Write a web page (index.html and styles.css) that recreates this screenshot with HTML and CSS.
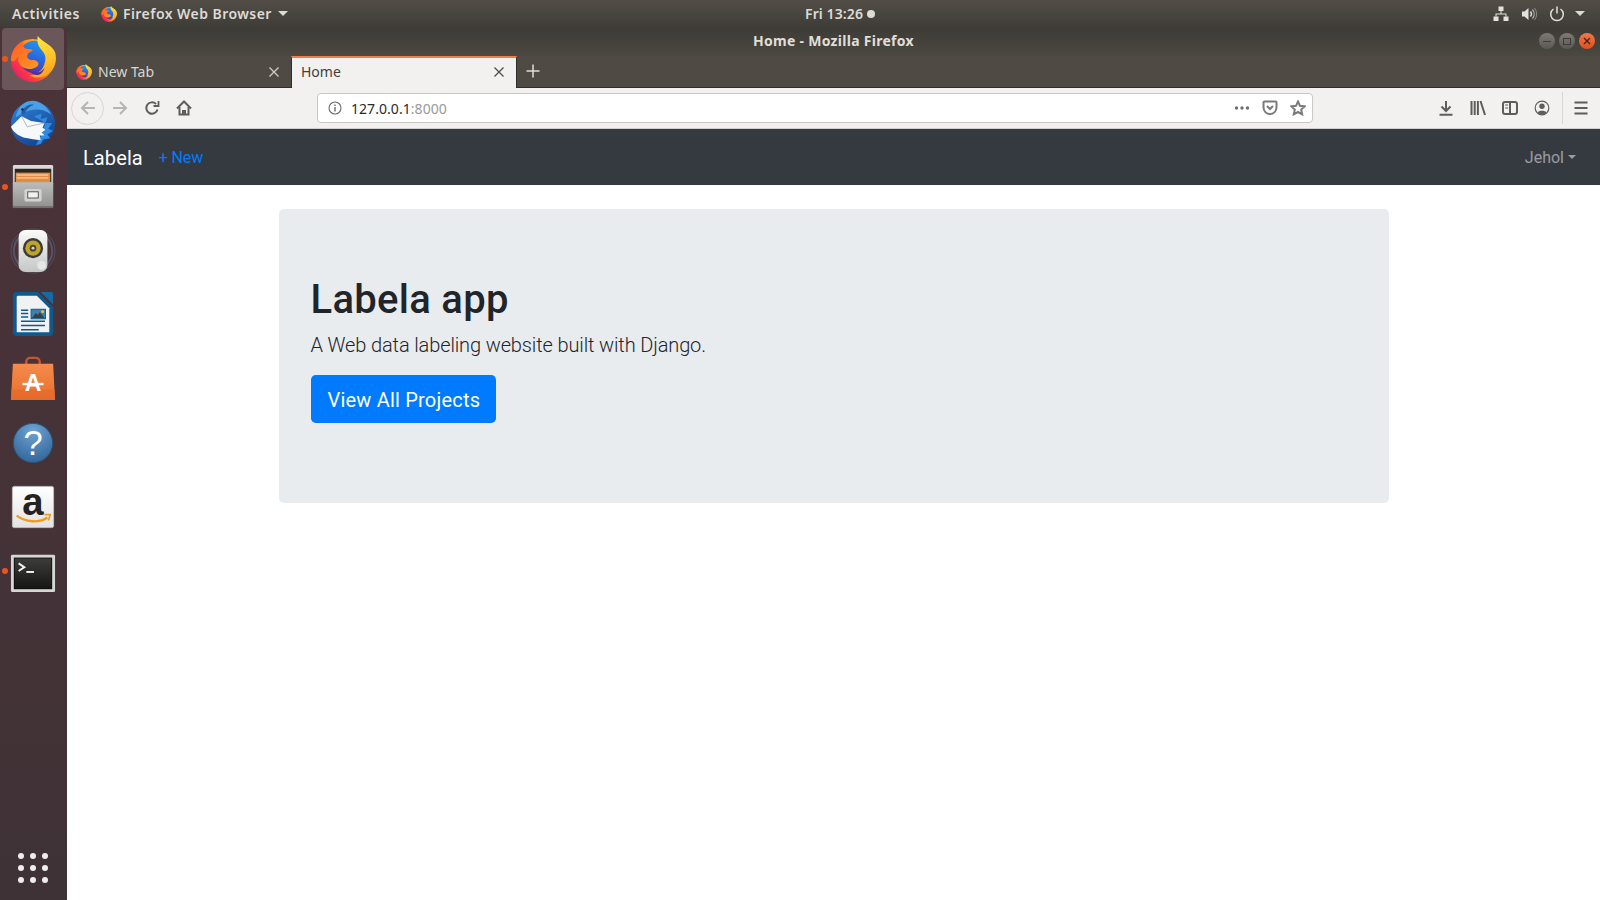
FILE: index.html
```html
<!DOCTYPE html>
<html lang="en">
<head>
    <meta charset="UTF-8">
    <title>Home - Mozilla Firefox</title>
    <link rel="stylesheet" href="styles.css">
</head>
<body>
    <svg class="defs" width="0" height="0">
        <defs>
            <linearGradient id="fxBody" x1="0.1" y1="0.9" x2="0.9" y2="0.2">
                <stop offset="0" stop-color="#e8176f"/>
                <stop offset="0.3" stop-color="#ff3f3c"/>
                <stop offset="0.65" stop-color="#ff8a1e"/>
                <stop offset="1" stop-color="#ffc02e"/>
            </linearGradient>
            <linearGradient id="fxGlobe" x1="0.7" y1="0" x2="0.3" y2="1">
                <stop offset="0" stop-color="#1f9bf0"/>
                <stop offset="0.6" stop-color="#2f5fd8"/>
                <stop offset="1" stop-color="#5a2ba8"/>
            </linearGradient>
            <linearGradient id="fxFox" x1="0" y1="0" x2="1" y2="1">
                <stop offset="0" stop-color="#ff5a2a"/>
                <stop offset="1" stop-color="#ff9a1e"/>
            </linearGradient>
            <linearGradient id="fxHorn" x1="0.4" y1="0" x2="0.6" y2="1">
                <stop offset="0" stop-color="#ffe93a"/>
                <stop offset="0.6" stop-color="#ffc02a"/>
                <stop offset="1" stop-color="#ff9d1c"/>
            </linearGradient>
            <symbol id="firefox" viewBox="0 0 48 48">
                <circle cx="23.500" cy="25.500" r="22.500" fill="url(#fxBody)"/>
                <circle cx="26" cy="22" r="17" fill="url(#fxGlobe)"/>
                <path d="M29 0c-1 5 0 9 2 12 3 4 6 7 6 11 0 5-2 10-5 13-3 3-8 5-12 5 6 4 16 3 22-3 6-6 7-15 5-21-3-8-13-10-18-17z" fill="url(#fxHorn)"/>
                <path d="M1 25C1 16 7 8 14 6c-1 3 0 6 2 7 3 1 6 0 8 2-3 1-6 3-6 6 0 3 3 4 7 4 5 1 6 5 3 7-6 4-15 3-18-3-2-3-2-5-1-8-3 3-6 8-8 4z" fill="url(#fxFox)"/>
                <path d="M20 36c5 4 12 3 16-3-2 8-10 11-16 3z" fill="#4a2aa6"/>
            </symbol>
        </defs>
    </svg>

    <div class="screen">
        <header class="topbar">
            <div class="topbar-left">
                <span class="activities">Activities</span>
                <svg class="app-icon"><use href="#firefox"/></svg>
                <span class="app-name">Firefox Web Browser</span>
                <span class="tri"></span>
            </div>
            <div class="clock">Fri 13:26<span class="clock-dot"></span></div>
            <div class="topbar-right">
                <svg class="tray tray-net" viewBox="0 0 16 16" fill="#e4e2de">
                    <rect x="5.500" y="0.500" width="5" height="4.500"/>
                    <rect x="0.500" y="10.500" width="5" height="4.500"/>
                    <rect x="10.500" y="10.500" width="5" height="4.500"/>
                    <path d="M7.500 5h1v2.500H13.500v3h-1v-2h-9v2h-1v-3H7.500z"/>
                </svg>
                <svg class="tray tray-vol" viewBox="0 0 16 16">
                    <path d="M1 5.500h2.500L7.500 2v12L3.500 10.500H1z" fill="#e4e2de"/>
                    <path d="M9.500 5.500a4 4 0 0 1 0 5" fill="none" stroke="#e4e2de" stroke-width="1.300"/>
                    <path d="M11.500 3.500a7 7 0 0 1 0 9" fill="none" stroke="#e4e2de" stroke-width="1.200" opacity="0.7"/>
                    <path d="M13.500 2a9.500 9.500 0 0 1 0 12" fill="none" stroke="#e4e2de" stroke-width="1" opacity="0.45"/>
                </svg>
                <svg class="tray tray-power" viewBox="0 0 16 16" fill="none" stroke="#e4e2de" stroke-width="1.500">
                    <path d="M4.500 3a6.300 6.300 0 1 0 7 0"/>
                    <path d="M8 0.500v7"/>
                </svg>
                <span class="tri tri-right"></span>
            </div>
        </header>

        <div class="desktop">
            <nav class="dock">
                <div class="dock-item dock-active running">
                    <svg class="dock-icon"><use href="#firefox"/></svg>
                </div>

                <div class="dock-item">
                    <svg class="dock-icon" viewBox="0 0 48 48">
                        <defs>
                            <linearGradient id="tbBlue" x1="0.2" y1="0" x2="0.8" y2="1">
                                <stop offset="0" stop-color="#2f7fd4"/>
                                <stop offset="1" stop-color="#123f8c"/>
                            </linearGradient>
                        </defs>
                        <circle cx="24" cy="25" r="23" fill="url(#tbBlue)"/>
                        <path d="M25 17 33 14 32 20 39 18 37 24 44 24 40 30 45 32 39 36 42 40 35 41 32 46 27 47 32 38 37 24z" fill="#2f8ae0"/>
                        <path d="M6 18C8 8 14 1 22 1c8-1 16 5 21 14C35 9 27 9 20 11c-6 2-10 5-14 7z" fill="#4aa0e6"/>
                        <path d="M12 12c3-5 8-8 13-7-5 2-8 5-9 8-2 3-5 3-4-1z" fill="#1d5fa8"/>
                        <path d="M1 28 12 17 22 22 36 24 34 29 37 31 33 34 36 37 31 37 32 42 24 41 14 39C8 37 3 33 1 28z" fill="#f7f8fa"/>
                        <path d="M12 17 18 28 36 24" fill="none" stroke="#9aa3b0" stroke-width="0.800"/>
                        <circle cx="13" cy="10" r="1.300" fill="#13243f"/>
                    </svg>
                </div>

                <div class="dock-item running">
                    <svg class="dock-icon" viewBox="0 0 48 48">
                        <defs>
                            <linearGradient id="cabTop" x1="0" y1="0" x2="0" y2="1">
                                <stop offset="0" stop-color="#dcdcda"/>
                                <stop offset="1" stop-color="#8e8e8c"/>
                            </linearGradient>
                            <linearGradient id="cabFront" x1="0" y1="0" x2="0" y2="1">
                                <stop offset="0" stop-color="#bcbcba"/>
                                <stop offset="1" stop-color="#8f8f8d"/>
                            </linearGradient>
                        </defs>
                        <rect x="3" y="1" width="42" height="45" rx="1.500" fill="url(#cabTop)"/>
                        <rect x="5" y="5" width="38" height="14" fill="#2b2723"/>
                        <rect x="6" y="9" width="36" height="10" fill="#e68a3e"/>
                        <rect x="7" y="11" width="33" height="1" fill="#fbe9d4"/>
                        <rect x="7" y="14" width="33" height="1" fill="#fbe9d4"/>
                        <rect x="3" y="19" width="42" height="27" rx="1" fill="url(#cabFront)"/>
                        <rect x="3" y="44" width="42" height="2" fill="#6f6f6d"/>
                        <rect x="15" y="26" width="18" height="13" rx="2" fill="#d3d3d1"/>
                        <rect x="18.500" y="29" width="11" height="6.500" fill="#f2f2f0" stroke="#55524e" stroke-width="1"/>
                    </svg>
                </div>

                <div class="dock-item">
                    <svg class="dock-icon" viewBox="0 0 48 48">
                        <defs>
                            <linearGradient id="spkBody" x1="0" y1="0" x2="0" y2="1">
                                <stop offset="0" stop-color="#fbfbf9"/>
                                <stop offset="1" stop-color="#c4c7c6"/>
                            </linearGradient>
                        </defs>
                        <circle cx="24" cy="24" r="23" fill="none" stroke="#5f6d88" stroke-width="1" opacity="0.5"/>
                        <circle cx="24" cy="24" r="20" fill="none" stroke="#5f6d88" stroke-width="2" opacity="0.6"/>
                        <rect x="9" y="2" width="30" height="44" rx="7" fill="url(#spkBody)"/>
                        <circle cx="24" cy="21" r="10.500" fill="#3b3a36"/>
                        <circle cx="24" cy="21" r="8" fill="#bfa42c"/>
                        <circle cx="24" cy="21" r="3.500" fill="#4a4430"/>
                        <circle cx="24" cy="21" r="1.500" fill="#d8d8d0"/>
                        <circle cx="33" cy="39" r="4.500" fill="#e6e7e5"/>
                    </svg>
                </div>

                <div class="dock-item">
                    <svg class="dock-icon" viewBox="0 0 48 48">
                        <path d="M7 0h22l16 16v26a4 4 0 0 1-4 4H7a4 4 0 0 1-4-4V4a4 4 0 0 1 4-4z" fill="#0f5a8c"/>
                        <path d="M32 0h11a2 2 0 0 1 2 2v11z" fill="#146aa5"/>
                        <path d="M8 4h20l13 13v25H7V5z" fill="#f0f2f4"/>
                        <path d="M11.500 19h7.500M11.500 22.500h7.500M11.500 26h7.500M11.500 30.500h25M11.500 35h25M11.500 39.500h18.500" stroke="#0f5a8c" stroke-width="1.600"/>
                        <rect x="22" y="18" width="15" height="10" fill="#3f7fb0" stroke="#0f5a8c"/>
                        <path d="M23 27l4-5 2 2 2-3 5 6z" fill="#3b3f3a"/>
                        <circle cx="34" cy="20.500" r="1.500" fill="#f0c53a"/>
                    </svg>
                </div>

                <div class="dock-item">
                    <svg class="dock-icon" viewBox="0 0 48 48">
                        <defs>
                            <linearGradient id="bag" x1="0" y1="0" x2="0" y2="1">
                                <stop offset="0" stop-color="#f58b4c"/>
                                <stop offset="1" stop-color="#e86f2c"/>
                            </linearGradient>
                        </defs>
                        <path d="M17 12V6a4 4 0 0 1 4-4h6a4 4 0 0 1 4 4v6" fill="none" stroke="#c9562a" stroke-width="2.500"/>
                        <path d="M3 8h42l2 38H1z" fill="url(#bag)"/>
                        <path d="M1 35h46v11H1z" fill="#e4682a" opacity="0.6"/>
                        <text x="24" y="37" class="bag-letter">A</text>
                        <rect x="13" y="28" width="22" height="2.500" fill="#fff"/>
                    </svg>
                </div>

                <div class="dock-item">
                    <svg class="dock-icon" viewBox="0 0 48 48">
                        <defs>
                            <radialGradient id="help" cx="0.5" cy="0.2" r="0.9">
                                <stop offset="0" stop-color="#6fa3d3"/>
                                <stop offset="1" stop-color="#2c5f92"/>
                            </radialGradient>
                        </defs>
                        <circle cx="24" cy="24" r="20.500" fill="url(#help)" stroke="#27527e"/>
                        <text x="24" y="37" class="help-mark">?</text>
                    </svg>
                </div>

                <div class="dock-item">
                    <svg class="dock-icon" viewBox="0 0 48 48">
                        <defs>
                            <linearGradient id="amz" x1="0" y1="0" x2="0" y2="1">
                                <stop offset="0" stop-color="#ffffff"/>
                                <stop offset="1" stop-color="#e2e2e2"/>
                            </linearGradient>
                        </defs>
                        <rect x="2.500" y="2.500" width="43" height="43" rx="2" fill="url(#amz)" stroke="#bdbdbd"/>
                        <text x="24" y="32" class="amazon-a">a</text>
                        <path d="M7 33c9 7 24 8 32 2" fill="none" stroke="#f39a1c" stroke-width="2.400"/>
                        <path d="M36 32l6 0-2 6" fill="none" stroke="#f39a1c" stroke-width="1.800"/>
                    </svg>
                </div>

                <div class="dock-item running">
                    <svg class="dock-icon" viewBox="0 0 48 48">
                        <defs>
                            <linearGradient id="term" x1="0" y1="0" x2="0" y2="1">
                                <stop offset="0" stop-color="#3c3c3a"/>
                                <stop offset="1" stop-color="#161616"/>
                            </linearGradient>
                        </defs>
                        <rect x="1" y="7" width="46" height="39" rx="1.500" fill="#d6d6d4"/>
                        <rect x="4" y="10" width="40" height="33" fill="#111"/>
                        <rect x="5" y="11" width="38" height="31" fill="url(#term)"/>
                        <path d="M9 16l6 4-6 4" fill="none" stroke="#f2f2f2" stroke-width="2"/>
                        <rect x="17" y="24" width="8" height="2" fill="#f2f2f2"/>
                    </svg>
                </div>

                <div class="apps-grid">
                    <span></span><span></span><span></span>
                    <span></span><span></span><span></span>
                    <span></span><span></span><span></span>
                </div>
            </nav>

            <main class="window">
                <div class="titlebar">
                    <div class="title">Home - Mozilla Firefox</div>
                    <div class="win-buttons">
                        <span class="win-btn"><i class="win-min"></i></span>
                        <span class="win-btn"><i class="win-max"></i></span>
                        <span class="win-btn win-close">
                            <svg viewBox="0 0 8 8" width="8" height="8"><path d="M1 1l6 6M7 1l-6 6" stroke="#4a2412" stroke-width="1.400"/></svg>
                        </span>
                    </div>
                </div>

                <div class="tabstrip">
                    <div class="tab">
                        <svg class="tab-icon"><use href="#firefox"/></svg>
                        <span class="tab-label">New Tab</span>
                        <svg class="tab-close" viewBox="0 0 12 12"><path d="M1.500 1.500l9 9M10.500 1.500l-9 9" stroke="#cfccc6" stroke-width="1.300"/></svg>
                    </div>
                    <div class="tab tab-current">
                        <span class="tab-label">Home</span>
                        <svg class="tab-close" viewBox="0 0 12 12"><path d="M1.500 1.500l9 9M10.500 1.500l-9 9" stroke="#4e4e4e" stroke-width="1.300"/></svg>
                    </div>
                    <svg class="new-tab" viewBox="0 0 14 14"><path d="M7 0.500v13M0.500 7h13" stroke="#e0ded9" stroke-width="1.500"/></svg>
                </div>

                <div class="toolbar">
                    <span class="tool tool-back">
                        <svg viewBox="0 0 16 16" class="ic ic-off"><path d="M15 8H2M8 2L2 8l6 6"/></svg>
                    </span>
                    <span class="tool">
                        <svg viewBox="0 0 16 16" class="ic ic-off"><path d="M1 8h13M8 2l6 6-6 6"/></svg>
                    </span>
                    <span class="tool">
                        <svg viewBox="0 0 16 16" class="ic"><path d="M13.500 9.500A5.700 5.700 0 1 1 12 4"/><path d="M14.500 1v5h-5" stroke-width="1.800"/></svg>
                    </span>
                    <span class="tool">
                        <svg viewBox="0 0 16 16" class="ic"><path d="M1 8.500L8 1.500l7 7"/><path d="M3.500 7v7.500H7v-3.500h2v3.500h3.500V7"/></svg>
                    </span>

                    <div class="urlbar">
                        <svg viewBox="0 0 14 14" class="url-info">
                            <circle cx="7" cy="7" r="6" fill="none" stroke="#6c6c6c" stroke-width="1.100"/>
                            <rect x="6.300" y="6" width="1.400" height="4.500" fill="#6c6c6c"/>
                            <rect x="6.300" y="3.500" width="1.400" height="1.500" fill="#6c6c6c"/>
                        </svg>
                        <span class="url-text">127.0.0.1<span class="url-port">:8000</span></span>
                        <svg viewBox="0 0 16 16" class="url-action ic-fill"><circle cx="2.500" cy="8" r="1.700"/><circle cx="8" cy="8" r="1.700"/><circle cx="13.500" cy="8" r="1.700"/></svg>
                        <svg viewBox="0 0 16 16" class="url-action ic"><path d="M2.500 1.500h11a1 1 0 0 1 1 1v5a6.500 6.500 0 0 1-13 0v-5a1 1 0 0 1 1-1z"/><path d="M5 6l3 3 3-3"/></svg>
                        <svg viewBox="0 0 16 16" class="url-action ic"><path d="M8 1.500l2 4.300 4.700 0.600-3.500 3.200 1 4.700L8 12l-4.200 2.300 1-4.700L1.300 6.400 6 5.800z"/></svg>
                    </div>

                    <span class="tool tool-first">
                        <svg viewBox="0 0 16 16" class="ic"><path d="M8 1v10M3.500 6.500L8 11l4.500-4.500M1.500 14.800h13"/></svg>
                    </span>
                    <span class="tool">
                        <svg viewBox="0 0 16 16" class="ic"><path d="M1.500 1v14M4.700 1v14M7.900 1v14M10.500 1l4.500 14"/></svg>
                    </span>
                    <span class="tool">
                        <svg viewBox="0 0 16 16" class="ic"><rect x="1" y="2" width="14" height="12" rx="2"/><path d="M8 2v12"/><path d="M3.200 5h2.800M3.200 8h2.800" stroke-width="1.200"/></svg>
                    </span>
                    <span class="tool">
                        <svg viewBox="0 0 16 16" class="ic ic-thin"><circle cx="8" cy="8" r="6.800"/><circle cx="8" cy="6.300" r="2.700" class="ic-solid"/><path d="M3.500 12.500c1-2.500 8-2.500 9 0a6 6 0 0 1-9 0z" class="ic-solid"/></svg>
                    </span>
                    <span class="tool-sep"></span>
                    <span class="tool tool-menu">
                        <svg viewBox="0 0 16 16" class="ic"><path d="M1.500 2.500h13M1.500 8h13M1.500 13.500h13"/></svg>
                    </span>
                </div>

                <div class="page">
                    <div class="site-nav">
                        <a class="brand">Labela</a>
                        <a class="nav-new">+ New</a>
                        <a class="nav-user">Jehol<span class="caret"></span></a>
                    </div>
                    <div class="container">
                        <div class="jumbotron">
                            <h1>Labela app</h1>
                            <p class="lead">A Web data labeling website built with Django.</p>
                            <p class="cta"><a class="btn-primary">View All Projects</a></p>
                        </div>
                    </div>
                </div>
            </main>
        </div>
    </div>
</body>
</html>
```

FILE: styles.css
```css
* {
    margin: 0;
    padding: 0;
    box-sizing: border-box;
}

body {
    width: 1600px;
    height: 900px;
    overflow: hidden;
    background: #fff;
    font-family: 'Noto Sans', 'Open Sans', sans-serif;
}

.defs {
    display: block;
    height: 0;
}

.screen {
    height: 900px;
    display: flex;
    flex-direction: column;
}

/* top bar */
.topbar {
    height: 27px;
    flex: none;
    display: flex;
    align-items: center;
    background: linear-gradient(#524e47, #3f3d38);
    color: #dedbd5;
    font-size: 14px;
    font-weight: 600;
}

.topbar-left {
    flex: 0 0 805px;
    display: flex;
    align-items: center;
    padding-left: 12px;
}

.activities {
    letter-spacing: 0.55px;
}

.app-icon {
    width: 16px;
    height: 16px;
    margin-left: 21px;
}

.app-name {
    margin-left: 6px;
    letter-spacing: 0.45px;
}

.tri {
    width: 0;
    height: 0;
    margin-left: 6px;
    border-left: 5px solid transparent;
    border-right: 5px solid transparent;
    border-top: 5px solid #dedbd5;
}

.clock {
    display: flex;
    align-items: center;
    gap: 4px;
    letter-spacing: 0.1px;
}

.clock-dot {
    width: 8px;
    height: 8px;
    border-radius: 50%;
    background: #dedbd5;
}

.topbar-right {
    margin-left: auto;
    display: flex;
    align-items: center;
    padding-right: 15px;
}

.tray {
    width: 16px;
    height: 16px;
}

.tray-vol {
    margin-left: 12px;
}

.tray-power {
    margin-left: 12px;
}

.tri-right {
    margin-left: 10px;
}

/* launcher */
.desktop {
    flex: 1;
    display: flex;
    min-height: 0;
}

.dock {
    width: 67px;
    flex: none;
    display: flex;
    flex-direction: column;
    gap: 2px;
    padding: 1px 3px 0 2px;
    background: linear-gradient(#4b3339, #3f3236);
}

.dock-item {
    position: relative;
    width: 62px;
    height: 62px;
    flex: none;
    display: flex;
    align-items: center;
    justify-content: center;
    border-radius: 4px;
}

.dock-active {
    background: #6b575a;
}

.running::before {
    content: "";
    position: absolute;
    left: 0;
    top: 28px;
    width: 6px;
    height: 6px;
    border-radius: 50%;
    background: #e9541f;
}

.dock-icon {
    width: 46px;
    height: 46px;
    overflow: visible;
}

.bag-letter {
    font-family: 'Liberation Sans', sans-serif;
    font-size: 24px;
    font-weight: 700;
    fill: #fff;
    text-anchor: middle;
}

.help-mark {
    font-family: 'Liberation Sans', sans-serif;
    font-size: 36px;
    font-weight: 400;
    fill: #fff;
    text-anchor: middle;
}

.amazon-a {
    font-family: 'Liberation Sans', sans-serif;
    font-size: 40px;
    font-weight: 700;
    fill: #222;
    text-anchor: middle;
}

.apps-grid {
    margin: auto 0 17px 16px;
    display: grid;
    grid-template-columns: repeat(3, 6px);
    gap: 6px;
}

.apps-grid span {
    width: 6px;
    height: 6px;
    border-radius: 50%;
    background: #f0eeec;
}

/* firefox window */
.window {
    flex: 1;
    min-width: 0;
    display: flex;
    flex-direction: column;
}

.titlebar {
    position: relative;
    height: 29px;
    flex: none;
    display: flex;
    align-items: center;
    justify-content: center;
    padding-bottom: 2px;
    background: linear-gradient(#3d3b36, #4b4841);
    color: #e0ded9;
    font-size: 14px;
    font-weight: 700;
    letter-spacing: 0.28px;
}

.win-buttons {
    position: absolute;
    right: 5px;
    top: 6px;
    display: flex;
    gap: 4px;
}

.win-btn {
    width: 16px;
    height: 16px;
    display: flex;
    align-items: center;
    justify-content: center;
    border-radius: 50%;
    background: linear-gradient(#7d7a75, #5a5854);
}

.win-min {
    width: 8px;
    height: 1px;
    background: #3d3b37;
}

.win-max {
    width: 8px;
    height: 7px;
    border: 1px solid #3d3b37;
}

.win-close {
    background: linear-gradient(#f2794a, #de4f1d);
}

.tabstrip {
    height: 32px;
    flex: none;
    display: flex;
    align-items: stretch;
    background: #4f4b44;
    border-bottom: 1px solid #2f2d29;
    color: #d9d6d0;
    font-size: 14px;
}

.tab {
    width: 224px;
    display: flex;
    align-items: center;
    padding: 0 11px 0 9px;
}

.tab-icon {
    width: 16px;
    height: 16px;
    margin-right: 6px;
}

.tab-label {
    flex: 1;
}

.tab-close {
    width: 12px;
    height: 12px;
}

.tab-current {
    width: 226px;
    height: 32px;
    background: #f2f1ef;
    border-top: 2px solid #f07c4f;
    border-left: 1px solid #2f2d29;
    border-right: 1px solid #2f2d29;
    color: #3f3f3f;
    padding: 0 11px 3px 9px;
}

.new-tab {
    width: 14px;
    height: 14px;
    align-self: center;
    margin-left: 9px;
    margin-bottom: 2px;
}

.toolbar {
    height: 41px;
    flex: none;
    display: flex;
    align-items: center;
    padding-left: 4px;
    background: #f2f1ef;
    border-bottom: 1px solid #d2d0cc;
}

.tool {
    width: 32px;
    height: 32px;
    flex: none;
    display: flex;
    align-items: center;
    justify-content: center;
}

.tool-back {
    width: 33px;
    height: 33px;
    border: 1px solid #d6d5d2;
    border-radius: 50%;
}

.ic {
    width: 16px;
    height: 16px;
    fill: none;
    stroke: #5d5d5d;
    stroke-width: 2;
}

.ic-off {
    stroke: #b5b5b3;
}

.ic-thin {
    stroke-width: 1.200;
}

.ic-solid {
    fill: #5d5d5d;
    stroke: none;
}

.ic-fill {
    fill: #6e6e6e;
}

.urlbar {
    width: 996px;
    height: 30px;
    margin-left: 117px;
    flex: none;
    display: flex;
    align-items: center;
    padding: 0 6px 0 10px;
    background: #fff;
    border: 1px solid #c9c8c5;
    border-radius: 4px;
}

.url-info {
    width: 14px;
    height: 14px;
    flex: none;
}

.url-text {
    flex: 1;
    margin-left: 9px;
    font-size: 14px;
    letter-spacing: 0.05px;
    color: #2a2a2a;
}

.url-port {
    color: #9a9a9a;
}

.url-action {
    width: 16px;
    height: 16px;
    margin-left: 12px;
    flex: none;
}

.url-action.ic {
    stroke: #7a7a7a;
}

.tool-first {
    margin-left: 117px;
}

.tool-sep {
    width: 1px;
    height: 32px;
    margin: 0 2px 0 4px;
    background: #d9d8d5;
}

/* the page inside the browser */
.page {
    flex: 1;
    background: #fff;
    font-family: Roboto, sans-serif;
}

.site-nav {
    height: 56px;
    display: flex;
    align-items: center;
    padding: 0 24px 0 16px;
    background: #343a40;
}

.brand {
    padding-top: 1px;
    font-size: 20px;
    letter-spacing: 0.1px;
    color: #fff;
}

.nav-new {
    margin-left: 16px;
    font-size: 16px;
    letter-spacing: -0.15px;
    color: #007bff;
}

.nav-user {
    margin-left: auto;
    display: flex;
    align-items: center;
    font-size: 16px;
    color: rgba(255, 255, 255, 0.5);
}

.caret {
    margin-left: 4px;
    border-left: 4.800px solid transparent;
    border-right: 4.800px solid transparent;
    border-top: 4.800px solid rgba(255, 255, 255, 0.5);
}

.container {
    width: 1140px;
    margin: 0 auto;
    padding: 24px 15px 0;
}

.jumbotron {
    padding: 64px 32px;
    background: #e9ecef;
    border-radius: 4.800px;
    color: #212529;
}

h1 {
    height: 48px;
    padding-top: 3px;
    margin-bottom: 8px;
    font-size: 40px;
    font-weight: 500;
    line-height: 48px;
    letter-spacing: 0.3px;
}

.lead {
    height: 30px;
    padding-top: 1px;
    margin-bottom: 16px;
    font-size: 20px;
    font-weight: 300;
    line-height: 30px;
    letter-spacing: -0.13px;
}

.cta {
    margin-bottom: 16px;
    height: 48px;
}

.btn-primary {
    display: inline-block;
    width: 185px;
    height: 48px;
    padding: 10px 0 0 17px;
    font-size: 20px;
    font-weight: 400;
    line-height: 30px;
    letter-spacing: 0.2px;
    color: #fff;
    background: #007bff;
    border-radius: 4.800px;
}
```
